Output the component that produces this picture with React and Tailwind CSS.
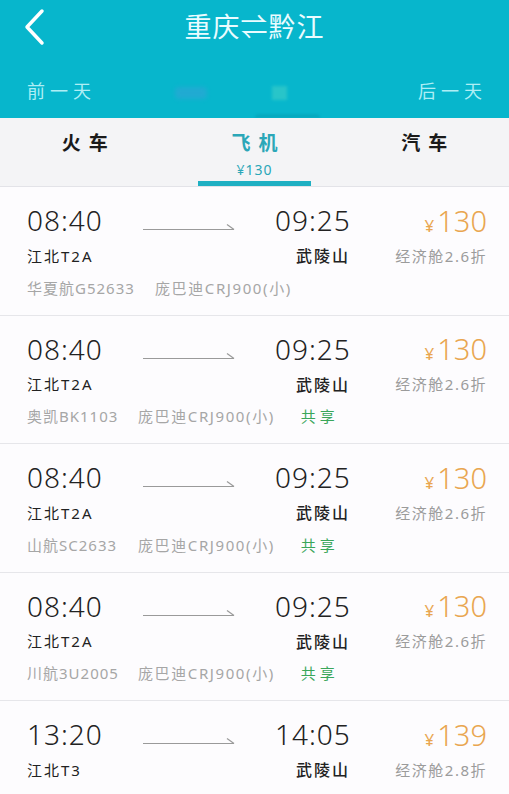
import React from "react";

const flights = [
  { dep: "08:40", arr: "09:25", from: "江北T2A", price: "130", cabin: "经济舱2.6折", no: "华夏航G52633", plane: "庞巴迪CRJ900(小)", share: false, wide: true },
  { dep: "08:40", arr: "09:25", from: "江北T2A", price: "130", cabin: "经济舱2.6折", no: "奥凯BK1103", plane: "庞巴迪CRJ900(小)", share: true },
  { dep: "08:40", arr: "09:25", from: "江北T2A", price: "130", cabin: "经济舱2.6折", no: "山航SC2633", plane: "庞巴迪CRJ900(小)", share: true },
  { dep: "08:40", arr: "09:25", from: "江北T2A", price: "130", cabin: "经济舱2.6折", no: "川航3U2005", plane: "庞巴迪CRJ900(小)", share: true },
  { dep: "13:20", arr: "14:05", from: "江北T3", price: "139", cabin: "经济舱2.8折", no: "", plane: "", share: false },
];

const font = { fontFamily: '"Noto Sans", "Noto Sans CJK SC", sans-serif' };

function Arrow() {
  return (
    <svg width="94" height="8" viewBox="0 0 94 8" className="block">
      <line x1="1" y1="6.5" x2="92" y2="6.5" stroke="#9a9a9a" strokeWidth="1.2" />
      <line x1="85" y1="1.5" x2="92" y2="6.5" stroke="#9a9a9a" strokeWidth="1.2" />
    </svg>
  );
}

function Card({ f }) {
  return (
    <div className="h-[128.5px] border-b border-[#e6e6ea] bg-[#fdfcfe] pl-[27px] pr-[22px] pt-[15px]">
      <div className="flex h-[36px] items-center">
        <div className="w-[115px] text-[28px] font-light leading-none tracking-[1px] text-[#222]">{f.dep}</div>
        <div className="w-[133px] pt-[14px]"><Arrow /></div>
        <div className="w-[74px] text-[28px] font-light leading-none tracking-[1px] text-[#222]">{f.arr}</div>
        <div className="flex flex-1 items-baseline justify-end text-[#e9a650]">
          <span className="text-[17px] leading-none">¥</span>
          <span className="ml-[3px] text-[29px] font-light leading-none">{f.price}</span>
        </div>
      </div>
      <div className="mt-[7px] flex h-[22px] items-center">
        <div className="flex-1 text-[15px] leading-none tracking-[2px] text-[#222]">{f.from}</div>
        <div className="mr-[-2px] text-[16px] font-medium leading-none tracking-[2px] text-[#222]">武陵山</div>
        <div className="w-[139px] text-right text-[15px] leading-none tracking-[1.5px] text-[#9b9b9b]">{f.cabin}</div>
      </div>
      {f.no && (
        <div className="mt-[10px] flex h-[22px] items-center text-[15px] leading-none text-[#a6a6a6]">
          <span className={f.wide ? "w-[128px] tracking-[1px]" : "w-[111px] tracking-[1px]"}>{f.no}</span>
          <span className="tracking-[1.6px]">{f.plane}</span>
          {f.share && <span className="ml-[26px] text-[15px] tracking-[4px] text-[#3aa65a]">共享</span>}
        </div>
      )}
    </div>
  );
}

export default function App() {
  return (
    <div className="h-[794px] w-[509px] overflow-hidden bg-[#fdfcfe]" style={font}>
      <div className="relative h-[118px] bg-[#07b6cc]">
        <div className="flex h-[52px] items-center justify-center">
          <svg width="26" height="38" viewBox="0 0 26 38" className="absolute left-[22px] top-[8px]">
            <polyline points="20,3 5,19 20,35" fill="none" stroke="#ffffff" strokeWidth="3.5" strokeLinecap="round" strokeLinejoin="round" />
          </svg>
          <div className="text-[27px] leading-none tracking-[1px] text-[#eafcff]">重庆⇌黔江</div>
        </div>
        <div className="flex h-[66px] items-center justify-between px-[27px] pt-[12px]">
          <span className="mr-[-5px] text-[18px] tracking-[5px] text-[#aeeef5]">前一天</span>
          <span className="mr-[-5px] text-[18px] tracking-[5px] text-[#aeeef5]">后一天</span>
        </div>
        <div className="absolute left-[175px] top-[87px] h-[12px] w-[32px] rounded bg-[#3aa0d8] opacity-50 blur-[2px]" />
        <div className="absolute left-[272px] top-[86px] h-[14px] w-[15px] bg-[#3ecfc8] opacity-60 blur-[1.5px]" />
        <div className="absolute bottom-0 left-[255px] h-[4px] w-[65px] rounded-t-full bg-[#06a9bf] blur-[1px]" />
      </div>
      <div className="relative grid h-[68px] grid-cols-3 bg-[#f4f4f6]">
        <div className="flex justify-center pt-[12px]">
          <span className="mr-[-8px] text-[19px] font-bold leading-[26px] tracking-[8px] text-[#1a1a1a]">火车</span>
        </div>
        <div className="flex flex-col items-center pt-[12px]">
          <span className="mr-[-8px] text-[19px] font-bold leading-[26px] tracking-[8px] text-[#2ba7b8]">飞机</span>
          <span className="mt-[5px] text-[14px] leading-[18px] tracking-[1px] text-[#2ba7b8]">¥130</span>
          <div className="mt-auto h-[5px] w-[113px] bg-[#1fb0c3]" />
        </div>
        <div className="flex justify-center pt-[12px]">
          <span className="mr-[-8px] text-[19px] font-bold leading-[26px] tracking-[8px] text-[#1a1a1a]">汽车</span>
        </div>
      </div>
      <div className="h-px bg-[#e3e3e8]" />
      {flights.map((f, i) => (
        <Card key={i} f={f} />
      ))}
    </div>
  );
}
